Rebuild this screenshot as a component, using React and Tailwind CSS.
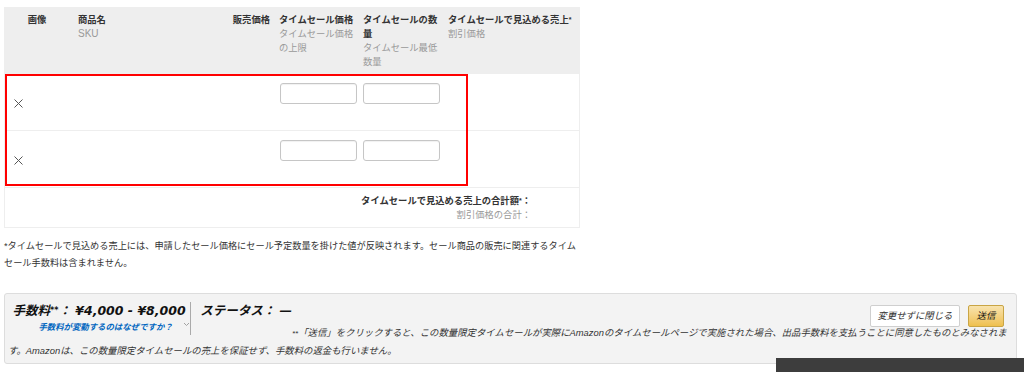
export default function App() {
  const cols = "grid grid-cols-[66px_160px_45px_84px_85px_1fr]";
  const rows = [1, 2];

  return (
    <div className="relative w-[1024px] h-[372px] overflow-hidden bg-white text-[#333] font-['Liberation_Sans','Noto_Sans_CJK_JP',sans-serif]">
      {/* deal table */}
      <div className="ml-[4px] pt-[7px] w-[576px]">
        <div className={`${cols} bg-[#eeeeee] h-[67px] pt-[6px] text-[9.3px] leading-[14px]`}>
          <div className="text-center font-bold">画像</div>
          <div className="pl-[8px]">
            <div className="font-bold">商品名</div>
            <div className="text-[#999] text-[10px]">SKU</div>
          </div>
          <div className="text-right pr-[5px] font-bold">販売価格</div>
          <div className="px-[4px]">
            <div className="font-bold">タイムセール価格</div>
            <div className="text-[#999]">タイムセール価格の上限</div>
          </div>
          <div className="px-[4px]">
            <div className="font-bold">タイムセールの数量</div>
            <div className="text-[#999]">タイムセール最低数量</div>
          </div>
          <div className="pl-[4px] whitespace-nowrap">
            <div className="font-bold">
              タイムセールで見込める売上<span className="align-top text-[7px]">*</span>
            </div>
            <div className="text-[#999]">割引価格</div>
          </div>
        </div>

        {rows.map((r) => (
          <div key={r} className={`${cols} h-[57px] border-x border-b border-[#eeeeee]`}>
            <div className="flex items-center pl-[8px] pt-[3px]">
              <svg width="11" height="11" viewBox="0 0 11 11">
                <path d="M1.5 1.5 L9.5 9.5 M9.5 1.5 L1.5 9.5" stroke="#555" strokeWidth="1" fill="none" />
              </svg>
            </div>
            <div />
            <div />
            <div className="pt-[7px] px-[4px]">
              <input className="w-[77px] h-[21px] border border-[#c6c6c6] rounded-[3px] shadow-[inset_0_1px_1px_rgba(0,0,0,0.06)] bg-white" />
            </div>
            <div className="pt-[7px] px-[3px]">
              <input className="w-[77px] h-[21px] border border-[#c6c6c6] rounded-[3px] shadow-[inset_0_1px_1px_rgba(0,0,0,0.06)] bg-white" />
            </div>
            <div />
          </div>
        ))}

        <div className="h-[40px] border-x border-b border-[#eeeeee] flex flex-col items-end pr-[48px] pt-[6px] text-[9.3px] leading-[14px]">
          <div className="font-bold">
            タイムセールで見込める売上の合計額<span className="align-top text-[7px]">*</span>：
          </div>
          <div className="text-[#999]">割引価格の合計：</div>
        </div>

        <p className="mt-[10px] w-[578px] text-[9.2px] leading-[17px] text-[#333]">
          *タイムセールで見込める売上には、申請したセール価格にセール予定数量を掛けた値が反映されます。セール商品の販売に関連するタイムセール手数料は含まれません。
        </p>
      </div>

      {/* fee / submit panel */}
      <div className="ml-[4px] mt-[21px] w-[1013px] bg-[#f3f3f3] border border-[#dddddd] rounded-[3px] pl-[3px] pr-[9px] pb-[4px] italic">
        <div className="float-left w-[284px] h-[46px] pt-[8px] flex whitespace-nowrap">
          <div className="w-[190px] h-[33px] border-r border-[#aaaaaa] text-center">
            <div className="text-[12.5px] leading-[18px] font-bold text-[#111] font-['DejaVu_Sans','Noto_Sans_CJK_JP',sans-serif]">
              手数料<span className="text-[8px] align-top">**</span>： ¥4,000 - ¥8,000
            </div>
            <div className="flex items-center justify-center gap-[10px] pl-[30px] text-[8.4px] leading-[14px] font-bold text-[#0066c0]">
              <span>手数料が変動するのはなぜですか？</span>
              <svg width="7" height="5" viewBox="0 0 7 5" className="-mt-[6px]">
                <path d="M1 1 L3.5 3.5 L6 1" stroke="#999" strokeWidth="0.9" fill="none" />
              </svg>
            </div>
          </div>
          <div className="pl-[9px] text-[12.5px] leading-[18px] font-bold text-[#111] font-['DejaVu_Sans','Noto_Sans_CJK_JP',sans-serif]">
            ステータス： —
          </div>
        </div>

        <div className="float-right flex gap-[8px] mt-[11px] -mb-[6px] mr-[3px] text-[9.4px]">
          <button className="h-[22px] w-[90px] bg-white border border-[#cfcfcf] rounded-[2px] italic text-[#333]">
            変更せずに閉じる
          </button>
          <button className="h-[22px] w-[36px] bg-gradient-to-b from-[#f8e3ad] to-[#efc04d] border border-[#c9a545] rounded-[2px] italic text-[#111]">
            送信
          </button>
        </div>

        <p className="pt-[30px] text-[9.4px] leading-[17px] text-[#333]">
          <span className="text-[8px]">**</span>「送信」をクリックすると、この数量限定タイムセールが実際にAmazonのタイムセールページで実施された場合、出品手数料を支払うことに同意したものとみなされます。Amazonは、この数量限定タイムセールの売上を保証せず、手数料の返金も行いません。
        </p>
      </div>

      {/* red highlight annotation */}
      <div className="absolute left-[5px] top-[74px] w-[463px] h-[112px] border-2 border-[#ff0000]" />

      {/* dark bar peeking in at the bottom right */}
      <div className="absolute right-0 bottom-0 w-[248px] h-[14px] bg-[#3d3d3d]" />
    </div>
  );
}
